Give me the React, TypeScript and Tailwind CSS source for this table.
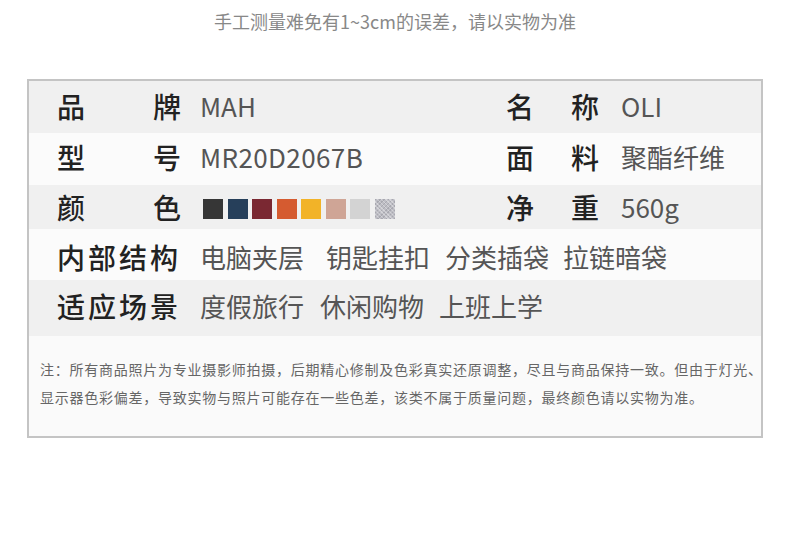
import React from "react";

const FONT = { fontFamily: '"Noto Sans CJK SC", "Noto Sans", sans-serif' };

function Label({ text, w }: { text: string; w: string }) {
  return (
    <div className={`flex justify-between text-[28px] leading-none text-[#222] font-medium ${w}`}>
      {text.split("").map((c, i) => (
        <span key={i}>{c}</span>
      ))}
    </div>
  );
}

const swatches = ["#363636", "#263f5a", "#7a2832", "#d55b30", "#f2b328", "#cfa596", "#d3d3d3"];

export default function App() {
  return (
    <div className="w-[790px] h-[538px] bg-white" style={FONT}>
      <div className="pt-[9px] h-[79px] text-center text-[18px] leading-[24px] text-[#888]">
        手工测量难免有1~3cm的误差，请以实物为准
      </div>
      <div className="mx-auto w-[736px] h-[359px] border-2 border-[#c4c4c4] bg-[#fafafa] flex flex-col">
        {/* row 1 */}
        <div className="h-[52px] bg-[#f0f0f0] flex items-center pl-[28px] pb-[2px]">
          <div className="w-[449px] flex items-center">
            <Label text="品牌" w="w-[124px]" />
            <span className="ml-[19px] text-[26px] leading-none text-[#555]">MAH</span>
          </div>
          <Label text="名称" w="w-[93px]" />
          <span className="ml-[22px] text-[26px] leading-none text-[#555]">OLI</span>
        </div>
        {/* row 2 */}
        <div className="h-[52px] bg-[#fbfbfb] flex items-center pl-[28px] pb-[4px]">
          <div className="w-[449px] flex items-center">
            <Label text="型号" w="w-[124px]" />
            <span className="ml-[19px] text-[26px] leading-none text-[#555] tracking-[0.4px]">MR20D2067B</span>
          </div>
          <Label text="面料" w="w-[93px]" />
          <span className="ml-[22px] text-[26px] leading-none text-[#555]">聚酯纤维</span>
        </div>
        {/* row 3 */}
        <div className="h-[44px] bg-[#f0f0f0] flex items-center pl-[28px] pt-[0px]">
          <div className="w-[449px] flex items-center">
            <Label text="颜色" w="w-[124px]" />
            <div className="ml-[22px] flex gap-[4.5px] mt-[3px]">
              {swatches.map((c) => (
                <div key={c} className="w-[20px] h-[20px]" style={{ backgroundColor: c }} />
              ))}
              <div
                className="w-[20px] h-[20px]"
                style={{
                  backgroundColor: "#bdbdc4",
                  backgroundImage:
                    "repeating-linear-gradient(45deg, rgba(255,255,255,0.35) 0 1px, transparent 1px 3px), repeating-linear-gradient(-45deg, rgba(120,120,130,0.3) 0 1px, transparent 1px 3px)",
                }}
              />
            </div>
          </div>
          <Label text="净重" w="w-[93px]" />
          <span className="ml-[22px] text-[26px] leading-none text-[#555]">560g</span>
        </div>
        {/* row 4 */}
        <div className="h-[51px] bg-[#fbfbfb] flex items-center pl-[28px] pt-[4px]">
          <Label text="内部结构" w="w-[121px]" />
          <div className="ml-[22px] flex text-[26px] leading-none text-[#555] whitespace-nowrap">
            <span>电脑夹层</span>
            <span className="ml-[22px]">钥匙挂扣</span>
            <span className="ml-[15px]">分类插袋</span>
            <span className="ml-[14px]">拉链暗袋</span>
          </div>
        </div>
        {/* row 5 */}
        <div className="h-[56px] bg-[#f0f0f0] flex items-center pl-[28px] pb-[4px]">
          <Label text="适应场景" w="w-[121px]" />
          <div className="ml-[22px] flex text-[26px] leading-none text-[#555] whitespace-nowrap">
            <span>度假旅行</span>
            <span className="ml-[16px]">休闲购物</span>
            <span className="ml-[15px]">上班上学</span>
          </div>
        </div>
        {/* notes */}
        <div className="pl-[11px] pt-[19px] text-[14px] leading-[28px] text-[#666] tracking-[0.75px] whitespace-nowrap">
          注：所有商品照片为专业摄影师拍摄，后期精心修制及色彩真实还原调整，尽且与商品保持一致。但由于灯光、
          <br />
          显示器色彩偏差，导致实物与照片可能存在一些色差，该类不属于质量问题，最终颜色请以实物为准。
        </div>
      </div>
    </div>
  );
}
